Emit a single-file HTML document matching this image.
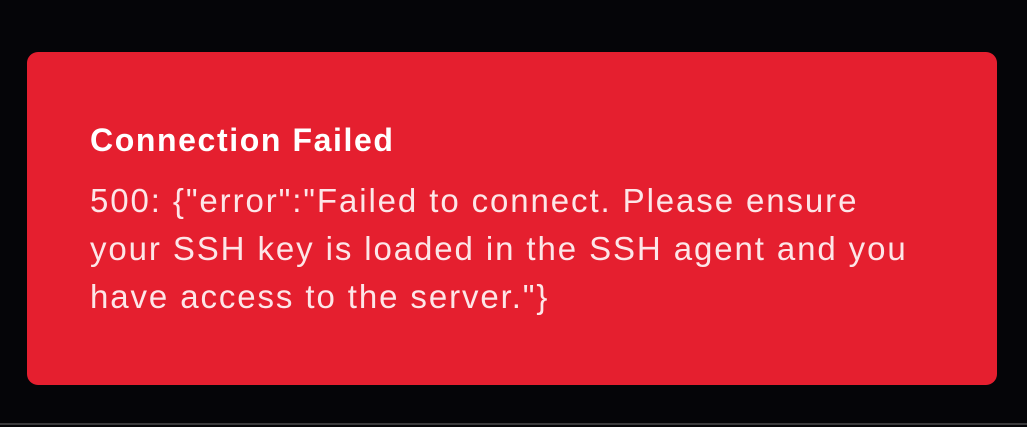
<!DOCTYPE html>
<html><head><style>
html,body{margin:0;padding:0;width:1027px;height:427px;background:#050508;overflow:hidden;font-family:"Liberation Sans",sans-serif}
.line{position:absolute;left:0;top:423px;width:1027px;height:2px;background:#3a3a3c}
.card{position:absolute;left:27px;top:52px;width:970px;height:333px;background:#e51f2f;border-radius:11px}
.t{position:absolute;left:63px;top:70px;font-size:32px;font-weight:bold;color:#fff;letter-spacing:1.6px;white-space:nowrap}
.b{position:absolute;left:63px;top:125px;font-size:33px;line-height:48px;color:#fde6e8;white-space:nowrap;letter-spacing:1.9px}
</style></head><body>
<div class="card">
<div class="t">Connection Failed</div>
<div class="b">500: {"error":"Failed to connect. Please ensure<br>your SSH key is loaded in the SSH agent and you<br>have access to the server."}</div>
</div>
<div class="line"></div>
</body></html>
